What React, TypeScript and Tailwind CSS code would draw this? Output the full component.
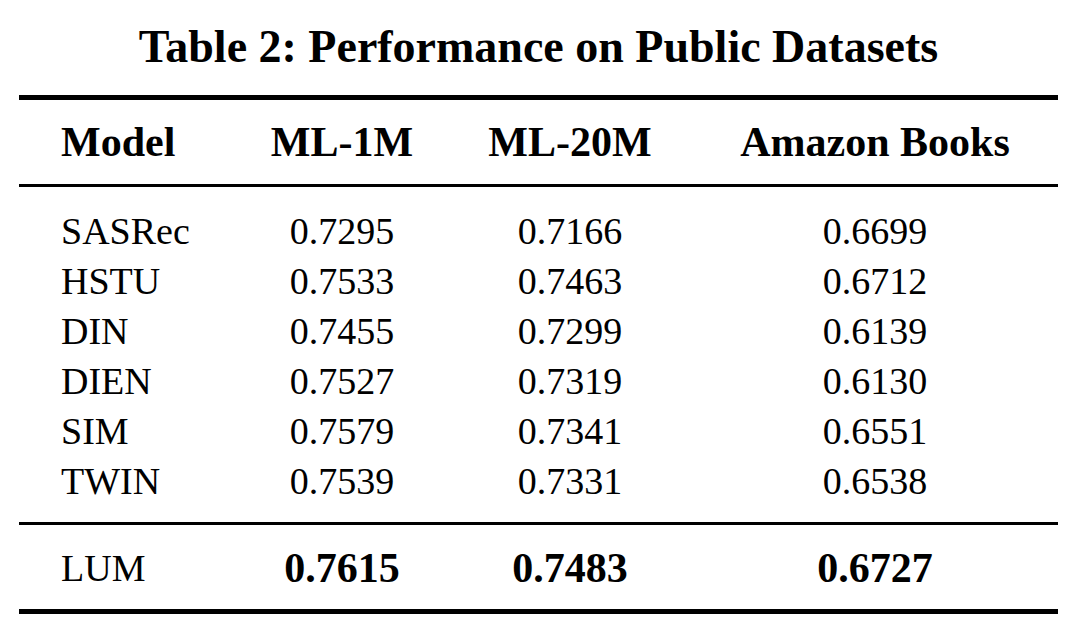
const rows: [string, string, string, string][] = [
  ["SASRec", "0.7295", "0.7166", "0.6699"],
  ["HSTU", "0.7533", "0.7463", "0.6712"],
  ["DIN", "0.7455", "0.7299", "0.6139"],
  ["DIEN", "0.7527", "0.7319", "0.6130"],
  ["SIM", "0.7579", "0.7341", "0.6551"],
  ["TWIN", "0.7539", "0.7331", "0.6538"],
];

const cols = "grid grid-cols-[231px_184px_272px_338px]";

export default function App() {
  return (
    <div className="min-h-[634px] w-[1074px] bg-white pl-[19px] pr-[16px] pt-[24px] text-black font-['Liberation_Serif',serif]">
      <h1 className="text-center text-[46px] font-bold leading-[46px]">
        Table 2: Performance on Public Datasets
      </h1>

      <div className="mt-[25px] h-[5px] bg-black" />

      <div className={`${cols} pt-[22px] text-[42px] font-bold leading-[41px]`}>
        <div className="pl-[42px]">Model</div>
        <div className="text-center">ML-1M</div>
        <div className="text-center">ML-20M</div>
        <div className="text-center">Amazon Books</div>
      </div>

      <div className="mt-[21px] h-[3px] bg-black" />

      <div className="pt-[19px] pb-[16px] text-[38px] leading-[50px]">
        {rows.map((r) => (
          <div key={r[0]} className={cols}>
            <div className="pl-[42px]">{r[0]}</div>
            <div className="text-center">{r[1]}</div>
            <div className="text-center">{r[2]}</div>
            <div className="text-center">{r[3]}</div>
          </div>
        ))}
      </div>

      <div className="h-[3px] bg-black" />

      <div className={`${cols} pt-[18px] pb-[16px] text-[38px] leading-[50px]`}>
        <div className="pl-[42px]">LUM</div>
        <div className="text-center text-[42px] font-bold">0.7615</div>
        <div className="text-center text-[42px] font-bold">0.7483</div>
        <div className="text-center text-[42px] font-bold">0.6727</div>
      </div>

      <div className="h-[5px] bg-black" />
    </div>
  );
}
